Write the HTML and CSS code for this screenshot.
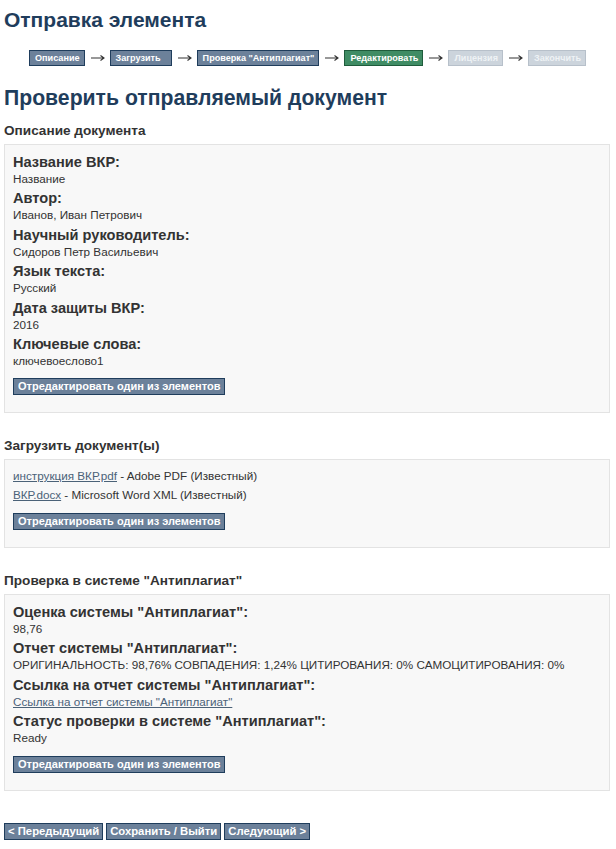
FILE: index.html
```html
<!DOCTYPE html>
<html>
<head>
  <meta charset="utf-8">
  <link rel="stylesheet" href="styles.css">
</head>
<body>
  <div class="page">
    <h1 class="page-title">Отправка элемента</h1>

    <div class="progress">
      <span class="step done">Описание</span>
      <svg class="arrow" width="14" height="8" viewBox="0 0 14 8"><path d="M0 4H13M9.5 1.5L13 4L9.5 6.5" fill="none" stroke="#333" stroke-width="1.1"/></svg>
      <span class="step done wide">Загрузить</span>
      <svg class="arrow" width="14" height="8" viewBox="0 0 14 8"><path d="M0 4H13M9.5 1.5L13 4L9.5 6.5" fill="none" stroke="#333" stroke-width="1.1"/></svg>
      <span class="step done">Проверка "Антиплагиат"</span>
      <svg class="arrow" width="14" height="8" viewBox="0 0 14 8"><path d="M0 4H13M9.5 1.5L13 4L9.5 6.5" fill="none" stroke="#333" stroke-width="1.1"/></svg>
      <span class="step current">Редактировать</span>
      <svg class="arrow" width="14" height="8" viewBox="0 0 14 8"><path d="M0 4H13M9.5 1.5L13 4L9.5 6.5" fill="none" stroke="#333" stroke-width="1.1"/></svg>
      <span class="step todo">Лицензия</span>
      <svg class="arrow" width="14" height="8" viewBox="0 0 14 8"><path d="M0 4H13M9.5 1.5L13 4L9.5 6.5" fill="none" stroke="#333" stroke-width="1.1"/></svg>
      <span class="step todo">Закончить</span>
    </div>

    <h2 class="review-title">Проверить отправляемый документ</h2>

    <!-- описание -->
    <div class="section">
      <div class="section-title">Описание документа</div>
      <div class="section-box">
        <div class="field">
          <div class="label">Название ВКР:</div>
          <div class="value">Название</div>
        </div>
        <div class="field">
          <div class="label">Автор:</div>
          <div class="value">Иванов, Иван Петрович</div>
        </div>
        <div class="field">
          <div class="label">Научный руководитель:</div>
          <div class="value">Сидоров Петр Васильевич</div>
        </div>
        <div class="field">
          <div class="label">Язык текста:</div>
          <div class="value">Русский</div>
        </div>
        <div class="field">
          <div class="label">Дата защиты ВКР:</div>
          <div class="value">2016</div>
        </div>
        <div class="field">
          <div class="label">Ключевые слова:</div>
          <div class="value">ключевоеслово1</div>
        </div>
        <button class="edit-btn">Отредактировать один из элементов</button>
      </div>
    </div>

    <!-- файлы -->
    <div class="section">
      <div class="section-title">Загрузить документ(ы)</div>
      <div class="section-box">
        <div class="file"><a href="#">инструкция ВКР.pdf</a> - Adobe PDF (Известный)</div>
        <div class="file"><a href="#">ВКР.docx</a> - Microsoft Word XML (Известный)</div>
        <button class="edit-btn">Отредактировать один из элементов</button>
      </div>
    </div>

    <!-- антиплагиат -->
    <div class="section">
      <div class="section-title">Проверка в системе "Антиплагиат"</div>
      <div class="section-box">
        <div class="field">
          <div class="label">Оценка системы "Антиплагиат":</div>
          <div class="value">98,76</div>
        </div>
        <div class="field">
          <div class="label">Отчет системы "Антиплагиат":</div>
          <div class="value">ОРИГИНАЛЬНОСТЬ: 98,76% СОВПАДЕНИЯ: 1,24% ЦИТИРОВАНИЯ: 0% САМОЦИТИРОВАНИЯ: 0%</div>
        </div>
        <div class="field">
          <div class="label">Ссылка на отчет системы "Антиплагиат":</div>
          <div class="value"><a href="#">Ссылка на отчет системы "Антиплагиат"</a></div>
        </div>
        <div class="field">
          <div class="label">Статус проверки в системе "Антиплагиат":</div>
          <div class="value">Ready</div>
        </div>
        <button class="edit-btn">Отредактировать один из элементов</button>
      </div>
    </div>

    <div class="nav-buttons">
      <button class="nav-btn">&lt; Передыдущий</button>
      <button class="nav-btn">Сохранить / Выйти</button>
      <button class="nav-btn">Следующий &gt;</button>
    </div>
  </div>
</body>
</html>
```

FILE: styles.css
```css
body {
  margin: 0;
  font-family: "Liberation Sans", Arial, sans-serif;
  color: #333;
  background: #fff;
}

.page {
  padding: 8px 6px 10px 4px;
}

.page-title {
  margin: 0;
  font-size: 21px;
  line-height: 24px;
  color: #1f3d5c;
}

.progress {
  display: flex;
  align-items: center;
  margin: 18px 0 0 25px;
  height: 16px;
  white-space: nowrap;
}

.step {
  font-size: 9.1px;
  font-weight: bold;
  line-height: 14px;
  padding: 0 4px 0 5px;
  border: 1px solid #1f3d5c;
  background: #6c819a;
  color: #fff;
}

.step.wide {
  padding-right: 10px;
}

.step.current {
  background: #3f8c64;
  border-color: #1f5c3c;
}

.step.todo {
  background: #ccd4dc;
  border-color: #b7c0ca;
  color: #eef2f5;
}

.arrow {
  margin: 0 5px 0 6px;
}

.review-title {
  margin: 20px 0 0;
  font-size: 21.2px;
  line-height: 24px;
  color: #1f3d5c;
}

.section {
  margin-top: 13px;
}

.section + .section {
  margin-top: 25px;
}

.section-title {
  font-size: 13.6px;
  font-weight: bold;
  line-height: 16px;
  margin-bottom: 5px;
}

.section-box {
  background: #f8f8f8;
  border: 1px solid #e3e3e3;
  padding: 8px 8px 17px;
}

.field {
  margin-bottom: 3.4px;
}

.label {
  font-size: 14.6px;
  font-weight: bold;
  line-height: 18px;
}

.value {
  font-size: 11.7px;
  line-height: 15px;
}

.file {
  font-size: 11.7px;
  line-height: 15px;
  margin-bottom: 4px;
}

a {
  color: #4b6278;
}

.edit-btn {
  display: block;
  box-sizing: border-box;
  height: 17px;
  margin-top: 10.5px;
  font-family: inherit;
  font-size: 11px;
  font-weight: bold;
  line-height: 15px;
  padding: 0 4px;
  border: 1px solid #1f3d5c;
  background: #6c819a;
  color: #fff;
  border-radius: 0;
}

.nav-buttons {
  display: flex;
  gap: 3px;
  margin-top: 32px;
}

.nav-btn {
  box-sizing: border-box;
  height: 17px;
  font-family: inherit;
  font-size: 11.3px;
  font-weight: bold;
  line-height: 15px;
  padding: 0 3px;
  border: 1px solid #1f3d5c;
  background: #6c819a;
  color: #fff;
  border-radius: 0;
}
```
